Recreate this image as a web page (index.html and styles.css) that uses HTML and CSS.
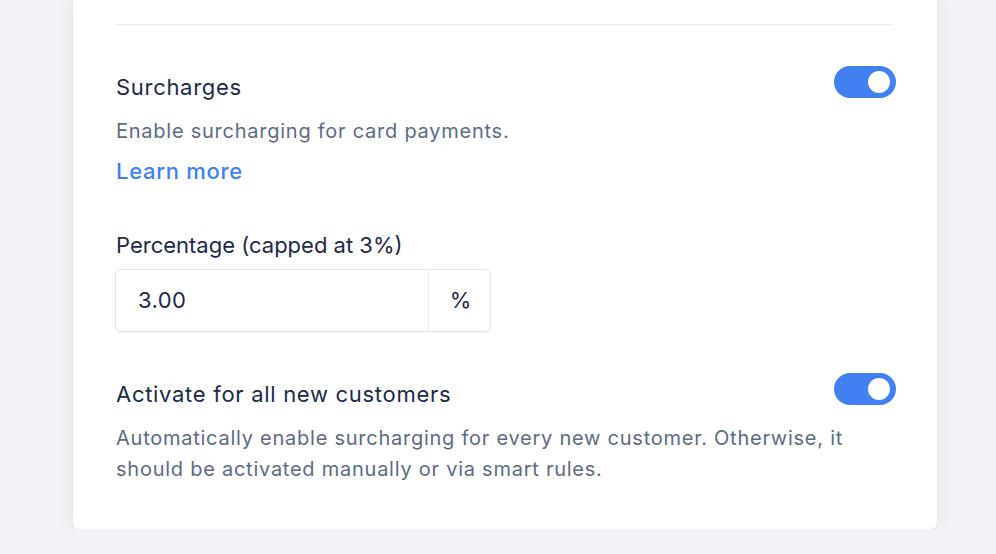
FILE: index.html
```html
<!DOCTYPE html>
<html lang="en">
<head>
<meta charset="utf-8">
<title>Surcharges</title>
<link rel="stylesheet" href="styles.css">
</head>
<body>
<main class="page">
  <section class="card">
    <hr class="divider">
    <div class="setting setting-first">
      <div class="setting-row">
        <h3 class="setting-title">Surcharges</h3>
        <span class="toggle is-on" role="switch" aria-checked="true"><span class="knob"></span></span>
      </div>
      <p class="setting-desc">Enable surcharging for card payments.</p>
      <a class="learn-more" href="#">Learn more</a>
    </div>

    <div class="field">
      <label class="field-label" for="pct">Percentage (capped at 3%)</label>
      <div class="input-group">
        <input id="pct" class="input" type="text" value="3.00">
        <span class="input-suffix">%</span>
      </div>
    </div>

    <div class="setting setting-second">
      <div class="setting-row">
        <h3 class="setting-title">Activate for all new customers</h3>
        <span class="toggle is-on" role="switch" aria-checked="true"><span class="knob"></span></span>
      </div>
      <p class="setting-desc">Automatically enable surcharging for every new customer. Otherwise, it should be activated manually or via smart rules.</p>
    </div>
  </section>
</main>
</body>
</html>
```

FILE: styles.css
```css
* { box-sizing: border-box; }

html, body {
  margin: 0;
  padding: 0;
  background: #f2f3f7;
  font-family: Inter, "Noto Sans", sans-serif;
  color: #1b2a4a;
}

.page {
  padding-left: 73px;
  width: 937px;
}

.card {
  margin-top: -12px;
  width: 864px;
  background: #ffffff;
  border-radius: 6px;
  box-shadow: 0 1px 2px rgba(16, 24, 40, 0.10), 0 4px 24px rgba(16, 24, 40, 0.05);
  padding: 36px 41px 44px 43px;
}

.divider {
  margin: 0 3px 0 0;
  border: 0;
  border-top: 1px solid #e9ebef;
  height: 0;
}

.setting-first { margin-top: 41px; }
.setting-second { margin-top: 41px; }

.setting-row {
  display: flex;
  justify-content: space-between;
  align-items: flex-start;
}

.setting-title {
  margin: 5px 0 0;
  font-size: 22px;
  line-height: 32px;
  font-weight: 400;
  letter-spacing: 0.7px;
  color: #1b2a4a;
}

.toggle {
  position: relative;
  display: block;
  flex: none;
  width: 62px;
  height: 32px;
  border-radius: 16px;
  background: #d1d5db;
}
.toggle.is-on { background: #4080f0; }

.knob {
  position: absolute;
  top: 5px;
  right: 6px;
  width: 22px;
  height: 22px;
  border-radius: 50%;
  background: #ffffff;
}

.setting-desc {
  margin: 13px 3px 0 0;
  font-size: 20px;
  line-height: 31px;
  letter-spacing: 0.75px;
  color: #5c6b87;
}

.learn-more {
  display: block;
  margin-top: 8px;
  font-size: 22px;
  line-height: 32px;
  font-weight: 500;
  letter-spacing: 0.7px;
  color: #3b82f6;
  text-decoration: none;
}

.field { margin-top: 42px; }

.field-label {
  display: block;
  font-size: 22px;
  line-height: 32px;
  color: #1b2a4a;
}

.input-group {
  margin-top: 7.5px;
  margin-left: -1px;
  display: flex;
  width: 376px;
  height: 63px;
  border: 1px solid #e3e6eb;
  border-radius: 6px;
  box-shadow: 0 1px 2px rgba(16, 24, 40, 0.06);
  background: #ffffff;
}

.input {
  flex: 1;
  min-width: 0;
  border: 0;
  background: transparent;
  padding: 0 0 0 22px;
  font-family: inherit;
  font-size: 22px;
  letter-spacing: 0.4px;
  color: #1b2a4a;
  outline: none;
}

.input-suffix {
  flex: none;
  width: 62px;
  display: flex;
  align-items: center;
  justify-content: center;
  border-left: 1px solid #e9ebef;
  padding-left: 2px;
  font-size: 22px;
  color: #1b2a4a;
}
```
